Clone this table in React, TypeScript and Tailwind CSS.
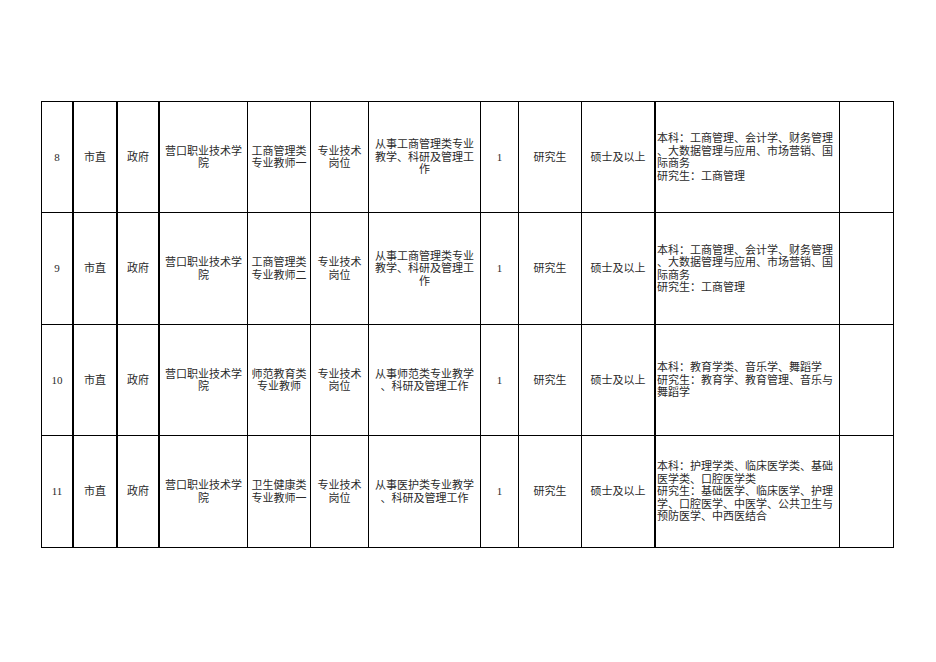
import React from "react";

type Row = {
  no: string;
  h: string;
  dept: string;
  post: string[];
  type: string[];
  duty: string[];
  req: string[];
};

const rows: Row[] = [
  {
    no: "8",
    h: "h-[111px]",
    dept: "营口职业技术学院",
    post: ["工商管理类", "专业教师一"],
    type: ["专业技术", "岗位"],
    duty: ["从事工商管理类专业", "教学、科研及管理工", "作"],
    req: ["本科：工商管理、会计学、财务管理", "、大数据管理与应用、市场营销、国", "际商务", "研究生：工商管理"],
  },
  {
    no: "9",
    h: "h-[112px]",
    dept: "营口职业技术学院",
    post: ["工商管理类", "专业教师二"],
    type: ["专业技术", "岗位"],
    duty: ["从事工商管理类专业", "教学、科研及管理工", "作"],
    req: ["本科：工商管理、会计学、财务管理", "、大数据管理与应用、市场营销、国", "际商务", "研究生：工商管理"],
  },
  {
    no: "10",
    h: "h-[111px]",
    dept: "营口职业技术学院",
    post: ["师范教育类", "专业教师"],
    type: ["专业技术", "岗位"],
    duty: ["从事师范类专业教学", "、科研及管理工作"],
    req: ["本科：教育学类、音乐学、舞蹈学", "研究生：教育学、教育管理、音乐与", "舞蹈学"],
  },
  {
    no: "11",
    h: "h-[112px]",
    dept: "营口职业技术学院",
    post: ["卫生健康类", "专业教师一"],
    type: ["专业技术", "岗位"],
    duty: ["从事医护类专业教学", "、科研及管理工作"],
    req: [
      "本科：护理学类、临床医学类、基础",
      "医学类、口腔医学类",
      "研究生：基础医学、临床医学、护理",
      "学、口腔医学、中医学、公共卫生与",
      "预防医学、中西医结合",
    ],
  },
];

function Lines({ lines }: { lines: string[] }) {
  return (
    <div>
      {lines.map((l, i) => (
        <div key={i} className="whitespace-nowrap">
          {l}
        </div>
      ))}
    </div>
  );
}

const cell = "flex items-center justify-center text-center border-black shrink-0";

export default function App() {
  return (
    <div
      className="w-[936px] h-[662px] bg-white pt-[101px] pl-[41px] text-[11px] leading-[12.5px] text-[#2a2a2a]"
      style={{ fontFamily: "'Liberation Serif', 'Noto Sans CJK SC', serif" }}
    >
      <div className="w-[853px] border-l border-t border-black">
        {rows.map((r) => (
          <div key={r.no} className={`flex border-b border-black ${r.h}`}>
            <div className={`${cell} w-[32px] border-r-2`}>{r.no}</div>
            <div className={`${cell} w-[44px] border-r-2`}>市直</div>
            <div className={`${cell} w-[42px] border-r-2`}>政府</div>
            <div className={`${cell} w-[88px] border-r`}>
              <Lines lines={[r.dept.slice(0, 7), r.dept.slice(7)]} />
            </div>
            <div className={`${cell} w-[63px] border-r`}>
              <Lines lines={r.post} />
            </div>
            <div className={`${cell} w-[58px] border-r`}>
              <Lines lines={r.type} />
            </div>
            <div className={`${cell} w-[112px] border-r`}>
              <Lines lines={r.duty} />
            </div>
            <div className={`${cell} w-[38px] border-r`}>1</div>
            <div className={`${cell} w-[63px] border-r`}>研究生</div>
            <div className={`${cell} w-[74px] border-r-2`}>硕士及以上</div>
            <div className="flex items-center w-[184px] border-r border-black shrink-0 pl-[1px] text-left">
              <Lines lines={r.req} />
            </div>
            <div className={`${cell} w-[54px] border-r`}></div>
          </div>
        ))}
      </div>
    </div>
  );
}
